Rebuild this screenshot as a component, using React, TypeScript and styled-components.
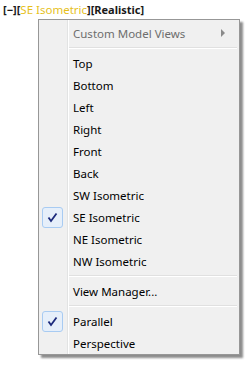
import * as React from "react";
import styled, { createGlobalStyle } from "styled-components";

const GlobalStyle = createGlobalStyle`
  html, body {
    margin: 0;
    padding: 0;
    background: #ffffff;
  }
`;

const Page = styled.div`
  width: 251px;
  height: 368px;
  background: #ffffff;
  overflow: hidden;
`;

const ViewportLabel = styled.div`
  height: 19px;
  padding-left: 3px;
  display: flex;
  align-items: center;
  font-family: "Noto Sans", "Open Sans", sans-serif;
  font-size: 11px;
  font-weight: bold;
  color: #1a1a1a;
  white-space: pre;
`;

const Highlight = styled.span`
  color: #e6bf1c;
  font-weight: normal;
  font-size: 11.5px;
`;

const Menu = styled.div`
  margin-left: 38px;
  width: 200px;
  padding: 2px 0 0 0;
  border: 1px solid #979797;
  background-color: #f0f0f0;
  background-image: linear-gradient(
    to right,
    transparent 28px,
    #e2e3e3 28px,
    #e2e3e3 29px,
    #ffffff 29px,
    #ffffff 30px,
    transparent 30px
  );
  box-shadow: 3px 3px 2px rgba(0, 0, 0, 0.45);
  font-family: "Noto Sans", "Open Sans", sans-serif;
  font-size: 11.5px;
`;

const Row = styled.div<{ $disabled?: boolean }>`
  height: 22px;
  display: grid;
  grid-template-columns: 30px 1fr 20px;
  align-items: center;
  color: ${(p) => (p.$disabled ? "#6d6d6d" : "#000000")};
`;

const Gutter = styled.div`
  display: flex;
  align-items: center;
  padding-left: 3px;
`;

const CheckBox = styled.div`
  width: 19px;
  height: 19px;
  border: 1px solid #a8cbf2;
  border-radius: 3px;
  background: #e6effa;
  display: flex;
  align-items: center;
  justify-content: center;
`;

const Label = styled.span`
  padding-left: 4px;
  white-space: nowrap;
`;

const Arrow = styled.span`
  width: 0;
  height: 0;
  border-top: 4px solid transparent;
  border-bottom: 4px solid transparent;
  border-left: 4px solid #8a8a8a;
  justify-self: start;
  margin-left: 2px;
`;

const Separator = styled.div`
  height: 8px;
  display: flex;
  align-items: center;
  padding-left: 30px;
  padding-right: 2px;
  &::after {
    content: "";
    flex: 1;
    height: 1px;
    background: #e0e0e0;
    border-bottom: 1px solid #ffffff;
  }
`;

const Check = () => (
  <svg width="11" height="11" viewBox="0 0 11 11">
    <path d="M1.5 5.5 L4 9 L9.5 1.5" fill="none" stroke="#1c2a7c" strokeWidth="1.8" />
  </svg>
);

type Item = { label: string; checked?: boolean };

const views: Item[] = [
  { label: "Top" },
  { label: "Bottom" },
  { label: "Left" },
  { label: "Right" },
  { label: "Front" },
  { label: "Back" },
  { label: "SW Isometric" },
  { label: "SE Isometric", checked: true },
  { label: "NE Isometric" },
  { label: "NW Isometric" },
];

const MenuRow: React.FC<{ item: Item }> = ({ item }) => (
  <Row>
    <Gutter>{item.checked && <CheckBox><Check /></CheckBox>}</Gutter>
    <Label>{item.label}</Label>
    <span />
  </Row>
);

const App: React.FC = () => (
  <Page>
    <GlobalStyle />
    <ViewportLabel>
      [−][<Highlight>SE Isometric</Highlight>][Realistic]
    </ViewportLabel>
    <Menu>
      <Row $disabled>
        <Gutter />
        <Label>Custom Model Views</Label>
        <Arrow />
      </Row>
      <Separator />
      {views.map((v) => (
        <MenuRow key={v.label} item={v} />
      ))}
      <Separator />
      <MenuRow item={{ label: "View Manager..." }} />
      <Separator />
      <MenuRow item={{ label: "Parallel", checked: true }} />
      <MenuRow item={{ label: "Perspective" }} />
    </Menu>
  </Page>
);

export default App;
